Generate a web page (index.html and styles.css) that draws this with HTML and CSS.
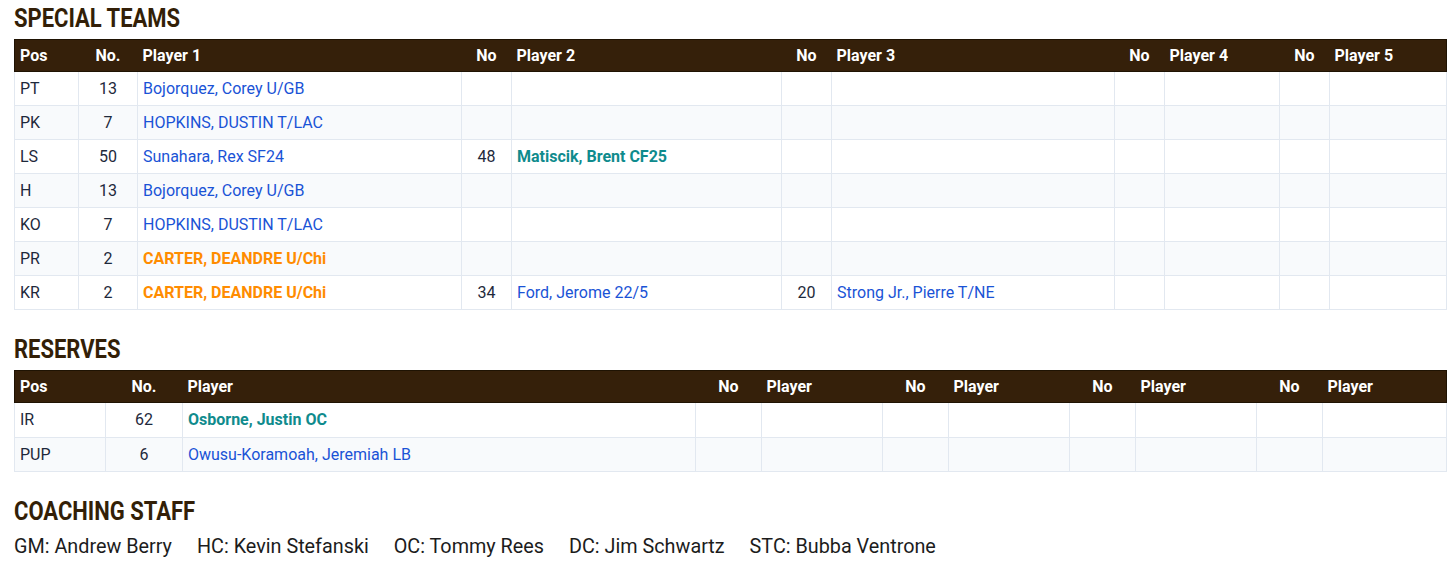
FILE: index.html
```html
<!DOCTYPE html>
<html lang="en">
<head>
<meta charset="utf-8">
<title>Depth Chart</title>
<link rel="stylesheet" href="styles.css">
</head>
<body>
<main class="page">
  <section class="block">
    <h2 class="section-title"><span class="title-text">SPECIAL TEAMS</span></h2>
    <table class="chart st">
      <colgroup>
        <col class="c-pos"><col class="c-no"><col class="c-p1"><col class="c-n2"><col class="c-p2"><col class="c-n3"><col class="c-p3"><col class="c-n4"><col class="c-p4"><col class="c-n5"><col class="c-p5">
      </colgroup>
      <thead>
        <tr><th>Pos</th><th class="num">No.</th><th>Player 1</th><th class="num">No</th><th>Player 2</th><th class="num">No</th><th>Player 3</th><th class="num">No</th><th>Player 4</th><th class="num">No</th><th>Player 5</th></tr>
      </thead>
      <tbody>
        <tr><td>PT</td><td class="num">13</td><td><a class="pl">Bojorquez, Corey U/GB</a></td><td></td><td></td><td></td><td></td><td></td><td></td><td></td><td></td></tr>
        <tr><td>PK</td><td class="num">7</td><td><a class="pl">HOPKINS, DUSTIN T/LAC</a></td><td></td><td></td><td></td><td></td><td></td><td></td><td></td><td></td></tr>
        <tr><td>LS</td><td class="num">50</td><td><a class="pl">Sunahara, Rex SF24</a></td><td class="num">48</td><td><a class="pl teal">Matiscik, Brent CF25</a></td><td></td><td></td><td></td><td></td><td></td><td></td></tr>
        <tr><td>H</td><td class="num">13</td><td><a class="pl">Bojorquez, Corey U/GB</a></td><td></td><td></td><td></td><td></td><td></td><td></td><td></td><td></td></tr>
        <tr><td>KO</td><td class="num">7</td><td><a class="pl">HOPKINS, DUSTIN T/LAC</a></td><td></td><td></td><td></td><td></td><td></td><td></td><td></td><td></td></tr>
        <tr><td>PR</td><td class="num">2</td><td><a class="pl orange">CARTER, DEANDRE U/Chi</a></td><td></td><td></td><td></td><td></td><td></td><td></td><td></td><td></td></tr>
        <tr><td>KR</td><td class="num">2</td><td><a class="pl orange">CARTER, DEANDRE U/Chi</a></td><td class="num">34</td><td><a class="pl">Ford, Jerome 22/5</a></td><td class="num">20</td><td><a class="pl">Strong Jr., Pierre T/NE</a></td><td></td><td></td><td></td><td></td></tr>
      </tbody>
    </table>
  </section>

  <section class="block">
    <h2 class="section-title"><span class="title-text">RESERVES</span></h2>
    <table class="chart res">
      <colgroup>
        <col class="r-pos"><col class="r-no"><col class="r-p1"><col class="r-n"><col class="r-p"><col class="r-n"><col class="r-p"><col class="r-n"><col class="r-p"><col class="r-n"><col class="r-plast">
      </colgroup>
      <thead>
        <tr><th>Pos</th><th class="num">No.</th><th>Player</th><th class="num">No</th><th>Player</th><th class="num">No</th><th>Player</th><th class="num">No</th><th>Player</th><th class="num">No</th><th>Player</th></tr>
      </thead>
      <tbody>
        <tr><td>IR</td><td class="num">62</td><td><a class="pl teal">Osborne, Justin OC</a></td><td></td><td></td><td></td><td></td><td></td><td></td><td></td><td></td></tr>
        <tr><td>PUP</td><td class="num">6</td><td><a class="pl">Owusu-Koramoah, Jeremiah LB</a></td><td></td><td></td><td></td><td></td><td></td><td></td><td></td><td></td></tr>
      </tbody>
    </table>
  </section>

  <section class="block">
    <h2 class="section-title"><span class="title-text">COACHING STAFF</span></h2>
    <ul class="staff">
      <li>GM: Andrew Berry</li>
      <li>HC: Kevin Stefanski</li>
      <li>OC: Tommy Rees</li>
      <li>DC: Jim Schwartz</li>
      <li>STC: Bubba Ventrone</li>
    </ul>
  </section>
</main>
</body>
</html>
```

FILE: styles.css
```css
* { box-sizing: border-box; }

html, body {
  margin: 0;
  padding: 0;
  background: #ffffff;
}

body {
  font-family: Roboto, "Liberation Sans", Arial, sans-serif;
  color: #1e293b;
}

.page {
  padding: 0 10px 0 14px;
}

.block {
  margin: 0;
}

.section-title {
  margin: 0;
  font-family: Roboto, "Liberation Sans", sans-serif;
  font-weight: 700;
  font-size: 25.5px;
  line-height: 34px;
  color: #331f07;
  padding-top: 1px;
}

.title-text {
  display: inline-block;
  transform: scaleX(0.862);
  transform-origin: left center;
}

.block + .block .section-title {
  padding-top: 22px;
}

.chart {
  width: 1432px;
  table-layout: fixed;
  border-collapse: collapse;
  margin-top: 4px;
  font-size: 16px;
  border: 1px solid #e2e8f0;
}

.chart th {
  background: #35200a;
  color: #ffffff;
  font-weight: 700;
  text-align: left;
  height: 32px;
  padding: 0 5px;
  border-top: 1px solid #1f1303;
  border-bottom: 1px solid #1f1303;
}

.chart th:first-child { border-left: 1px solid #1f1303; }
.chart th:last-child { border-right: 1px solid #1f1303; }

.chart td {
  height: 34px;
  padding: 0 5px;
  border: 1px solid #e2e8f0;
  color: #1e293b;
  white-space: nowrap;
}

.chart tbody tr:nth-child(even) td {
  background: #f8fafc;
}

.chart .num { text-align: center; }

.pl {
  color: #1a53d6;
  text-decoration: none;
}

.pl.teal {
  color: #0f8b8d;
  font-weight: 700;
}

.pl.orange {
  color: #ff8c00;
  font-weight: 700;
}

/* special teams columns */
.c-pos { width: 64px; }
.c-no { width: 59px; }
.c-p1 { width: 324px; }
.c-n2, .c-n3, .c-n4, .c-n5 { width: 50px; }
.c-p2 { width: 270px; }
.c-p3 { width: 283px; }
.c-p4 { width: 115px; }
.c-p5 { width: 117px; }

/* reserves columns */
.r-pos { width: 91px; }
.r-no { width: 77px; }
.r-p1 { width: 513px; }
.r-n { width: 66px; }
.r-p { width: 121px; }
.r-plast { width: 124px; }

.res td { height: 34.5px; }

.staff {
  list-style: none;
  margin: 5px 0 0;
  padding: 0;
  display: flex;
  gap: 25px;
  font-size: 19.8px;
  line-height: 28px;
  color: #1c1c1c;
}
```
